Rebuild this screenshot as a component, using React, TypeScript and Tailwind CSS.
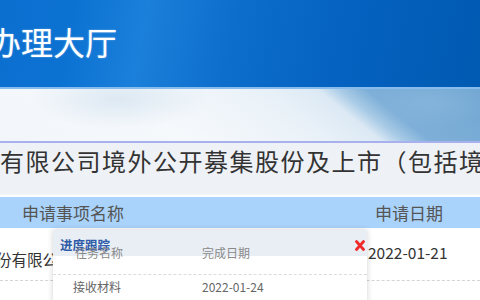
import React from "react";

const cjk = { fontFamily: '"Noto Sans CJK SC", "Noto Sans", sans-serif' };

export default function App() {
  return (
    <div className="relative w-[480px] h-[300px] overflow-hidden bg-white" style={cjk}>
      {/* header */}
      <div className="h-[87px] flex items-center bg-[linear-gradient(100deg,#0b6fd0_0%,#0c72d2_15%,#1b80da_30%,#0d6ecb_48%,#0562c0_70%,#005ab2_100%)]">
        <div className="ml-[-11px] mt-[-6px] text-[32px] leading-[40px] text-white [text-shadow:0_0_2px_rgba(255,255,255,0.4)]">
          办理大厅
        </div>
      </div>
      <div className="h-[2px] bg-[#86bdee]" />
      {/* sky */}
      <div className="h-[52px] bg-[radial-gradient(ellipse_90px_30px_at_120px_10px,rgba(214,228,240,0.8),rgba(214,228,240,0)),radial-gradient(ellipse_60px_25px_at_430px_14px,rgba(140,185,222,0.6),rgba(140,185,222,0)),linear-gradient(39deg,#f2f6fa_0%,#f6f9fc_35%,#e9f1f8_60%,#dce9f4_70%,#a9cbe6_74%,#7eafd8_79%,#72a7d2_100%)]" />
      {/* title box */}
      <div className="h-[53px] border-t-2 border-[#a8b0ee] bg-[#eef1f5] pt-[4px] whitespace-nowrap overflow-hidden">
        <div className="text-[24px] leading-[28px] text-[#333] tracking-[1.5px]">
          有限公司境外公开募集股份及上市（包括境外
        </div>
      </div>
      <div className="h-[3px] bg-white border-t border-[#f4f6f9]" />
      {/* table header */}
      <div className="h-[31px] bg-[#a9d3fb] flex items-center text-[17px] text-[#555] whitespace-nowrap">
        <div className="pl-[22px] w-[375px]">申请事项名称</div>
        <div>申请日期</div>
      </div>
      {/* row */}
      <div className="h-[53px] border-b border-dashed border-[#d4d4d4] flex items-center text-[15.5px] text-[#333] whitespace-nowrap">
        <div className="ml-[-4px] w-[372px] mt-[12px] overflow-hidden">份有限公司境外公开募集股份</div>
        <div className="mt-[-2px]">2022-01-21</div>
      </div>

      {/* popup */}
      <div className="absolute left-[53px] top-[230px] w-[314px] h-[80px] bg-white shadow-[0_0_6px_rgba(0,0,0,0.18)]">
        <div className="h-[26px] bg-[#e9eef4] pl-[7px] pt-[8px] text-[12.5px] leading-[13px] font-bold text-[#2f5aa8]">
          进度跟踪
        </div>
        <div className="mt-[-12px] h-[31px] border-b border-dashed border-[#dcdcdc] flex pt-[2px] text-[12px] leading-[14px] text-[#8a8a8a]">
          <div className="pl-[22px] w-[149px]">任务名称</div>
          <div>完成日期</div>
        </div>
        <div className="flex pt-[5px] text-[12px] leading-[14px] text-[#666]">
          <div className="pl-[20px] w-[149px]">接收材料</div>
          <div>2022-01-24</div>
        </div>
        <svg className="absolute right-[2px] top-[10px]" width="10" height="11" viewBox="0 0 10 11">
          <path d="M1.5 1.5 L8.5 9.5 M8.5 1.5 L1.5 9.5" stroke="#f02a2a" strokeWidth="2.8" strokeLinecap="round" />
        </svg>
      </div>
    </div>
  );
}
